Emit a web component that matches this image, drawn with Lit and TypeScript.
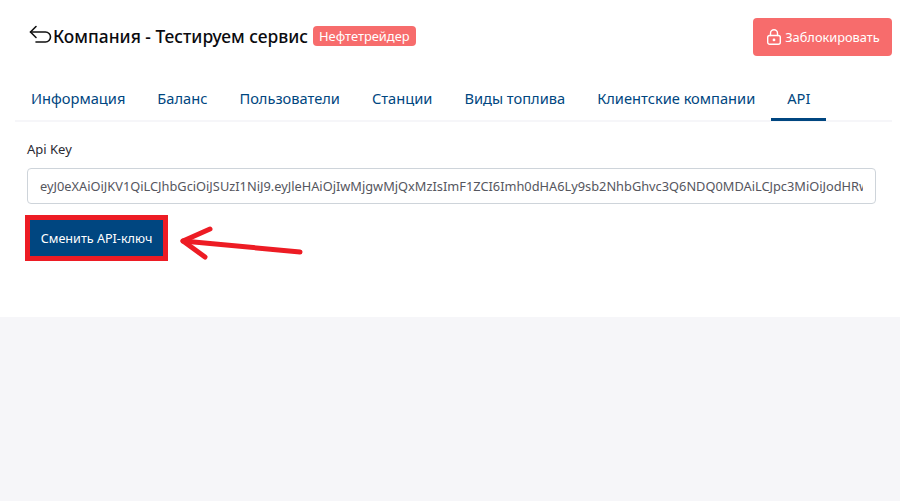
import { LitElement, html, css, svg } from "lit";
import { customElement } from "lit/decorators.js";

const KEY = "eyJ0eXAiOiJKV1QiLCJhbGciOiJSUzI1NiJ9.eyJleHAiOjIwMjgwMjQxMzIsImF1ZCI6Imh0dHA6Ly9sb2NhbGhvc3Q6NDQ0MDAiLCJpc3MiOiJodHRwOi8vbG9jYWxob3N0OjQ0NDAwIn0";
const TABS = ["Информация", "Баланс", "Пользователи", "Станции", "Виды топлива", "Клиентские компании", "API"];

@customElement("app-root")
export class AppRoot extends LitElement {
  static styles = css`
    :host { display: block; width: 900px; height: 501px; background: #f6f6f9; font-family: "Noto Sans", sans-serif; overflow: hidden; position: relative; }
    .card { background: #fff; height: 317px; box-sizing: border-box; padding: 18px 8px 0 15px; display: flex; flex-direction: column; }
    .head { display: flex; justify-content: space-between; align-items: flex-start; height: 38px; }
    .title { display: flex; align-items: center; padding: 6px 0 0 14px; }
    .title svg { width: 24px; height: 24px; flex: none; }
    h1 { margin: 0; font-size: 17.4px; font-weight: 500; line-height: 24px; color: #0b0b0f; white-space: nowrap; }
    .badge { margin-left: 5px; height: 20px; padding: 0 6px; background: #f76c6c; color: #fff; border-radius: 4px; font-size: 12.9px; font-weight: 400; line-height: 20px; white-space: nowrap; }
    .block { width: 139px; height: 38px; display: flex; align-items: center; justify-content: center; gap: 3px; background: #f76c6c; color: #fff; border: 0; border-radius: 4px; font: 400 12.8px "Noto Sans", sans-serif; padding: 0 0 0 1px; }
    .block svg { width: 16px; height: 16px; }
    .tabs { display: flex; margin-top: 23px; height: 41px; border-bottom: 2px solid #f6f6f9; }
    .tab { padding: 0 16px; height: 42px; box-sizing: border-box; line-height: 38px; font-size: 14.65px; color: #004680; white-space: nowrap; }
    .tab.on { border-bottom: 3px solid #004680; }
    .label { margin: 18px 0 0 12px; font-size: 13px; font-weight: 400; line-height: 18px; color: #2b2b33; }
    input { display: block; margin: 10px 0 0 12px; width: 849px; height: 36px; box-sizing: border-box; border: 1px solid #ced4da; border-radius: 4px; padding: 0 12px; font: 400 12.8px "Noto Sans", sans-serif; color: #55565e; background: #fff; outline: none; }
    .btn { margin: 16px 0 0 15px; width: 133px; height: 36px; background: #004680; color: #fff; border: 0; border-radius: 0; font: 400 12.6px "Noto Sans", sans-serif; outline: 5px solid #ed1c24; padding: 0; }
    .arrow { position: absolute; left: 170px; top: 220px; width: 140px; height: 50px; }
  `;

  render() {
    return html`
      <div class="card">
        <div class="head">
          <div class="title">
            ${svg`<svg viewBox="0 0 24 24" fill="none" stroke="#111" stroke-width="1.6" stroke-linecap="round" stroke-linejoin="round"><path d="M7 2.5 1.5 8 7 13.5"/><path d="M1.5 8H16.5a5 5 0 0 1 0 10H7"/></svg>`}
            <h1>Компания - Тестируем сервис</h1>
            <span class="badge">Нефтетрейдер</span>
          </div>
          <button class="block">
            ${svg`<svg viewBox="0 0 16 16" fill="none" stroke="#fff" stroke-width="1.4" stroke-linecap="round"><rect x="1.7" y="6.5" width="12.6" height="8.8" rx="2"/><path d="M4.5 6.5V4.2a3.5 3.5 0 0 1 7 0v2.3"/><circle cx="8" cy="10.9" r=".7" fill="#fff"/></svg>`}
            Заблокировать
          </button>
        </div>
        <div class="tabs">
          ${TABS.map((t) => html`<div class="tab ${t === "API" ? "on" : ""}">${t}</div>`)}
        </div>
        <div class="label">Api Key</div>
        <input readonly .value=${KEY} />
        <button class="btn">Сменить API-ключ</button>
      </div>
      ${svg`<svg class="arrow" viewBox="0 0 140 50" fill="none" stroke="#ed1c24" stroke-width="5" stroke-linecap="round" stroke-linejoin="round"><path d="M130 32 13 21"/><path d="M40 9 13 21 35 37"/></svg>`}
    `;
  }
}
